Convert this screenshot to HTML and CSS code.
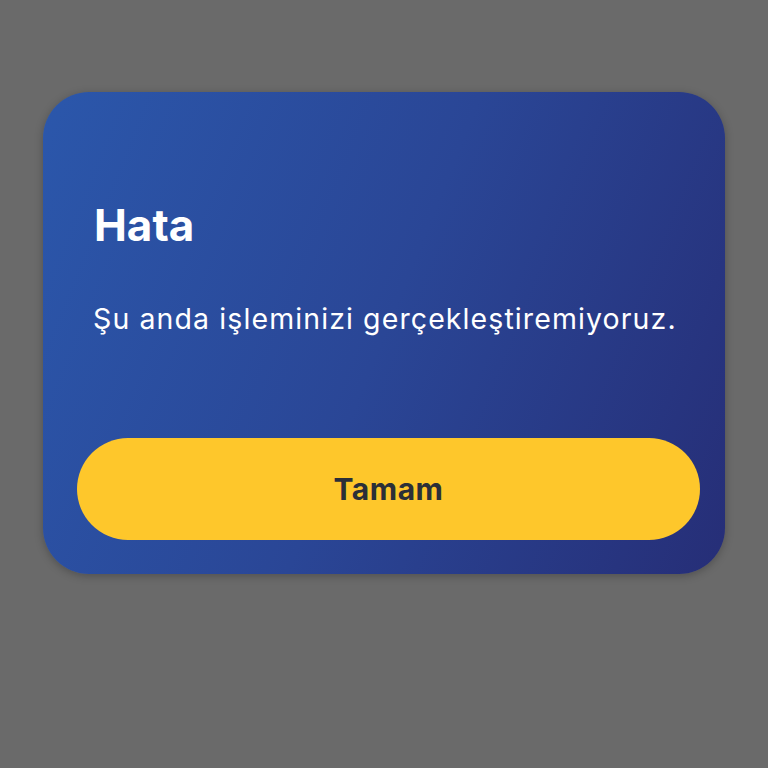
FILE: index.html
```html
<!DOCTYPE html>
<html lang="tr">

<head>
    <meta charset="UTF-8">
    <meta name="viewport" content="width=device-width, initial-scale=1.0">
    <title>Hata</title>
    <link rel="stylesheet" href="styles.css">
</head>

<body>
    <div class="dialog">
        <h1 class="title">Hata</h1>
        <p class="message">Şu anda işleminizi gerçekleştiremiyoruz.</p>
        <button class="ok_btn">Tamam</button>
    </div>
</body>

</html>
```

FILE: styles.css
```css
* {
    margin: 0;
    padding: 0;
    box-sizing: border-box;
}

body {
    height: 100vh;
    background: #6a6a6a;
    font-family: "Inter", "Noto Sans", sans-serif;
    padding-top: 92px;
}

.dialog {
    width: 682px;
    margin-left: 43px;
    height: 482px;
    padding: 108px 25px 34px 34px;
    border-radius: 46px;
    background: linear-gradient(112deg, #2b57ab 0%, #2a4696 50%, #262e77 100%);
    box-shadow: 0 2px 8px rgba(0, 0, 0, 0.25);
    display: flex;
    flex-direction: column;
}

.title {
    color: #fff;
    font-size: 44px;
    font-weight: 700;
    line-height: 50px;
    margin-left: 17px;
}

.message {
    color: #fff;
    font-size: 28.5px;
    letter-spacing: 1.1px;
    line-height: 36px;
    margin-top: 51px;
    margin-left: 16px;
}

.ok_btn {
    margin-top: auto;
    height: 102px;
    border: none;
    border-radius: 51px;
    background-color: #fec72b;
    color: #2b2f38;
    font-family: inherit;
    font-size: 30px;
    font-weight: 700;
    letter-spacing: 0.5px;
    cursor: pointer;
}
```
